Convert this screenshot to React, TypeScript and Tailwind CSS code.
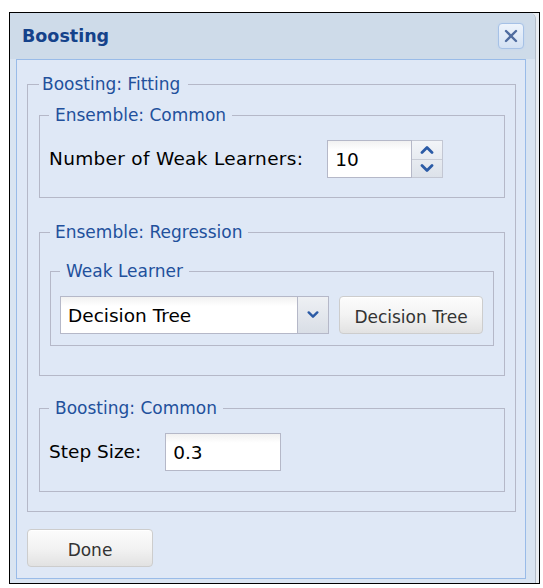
import React from 'react';

const legendText = 'text-[17px] leading-[20px] text-[#22509c]';
const fieldBorder = 'border border-[#b5b8c8]';
const inputCls =
  'h-[38px] border border-[#b5b8c8] bg-gradient-to-b from-[#f1f1f1] to-white to-[25%] px-[7px] text-[18.5px] text-black outline-none';
const btnCls =
  'h-[38px] rounded-[4px] border border-[#cdcdcd] bg-gradient-to-b from-[#fcfcfc] via-[#f3f3f3] via-50% to-[#e2e2e2] pt-[5px] text-[17px] text-[#333] shadow-[inset_0_1px_0_#fff]';

const Chevron = ({ up = false, w = 14 }: { up?: boolean; w?: number }) => (
  <svg width={w} height={w / 2 + 2} viewBox="0 0 14 9" fill="none">
    <path
      d={up ? 'M2 7.5 L7 2.5 L12 7.5' : 'M2 1.5 L7 6.5 L12 1.5'}
      stroke="#2b5ba6"
      strokeWidth="2.8"
      strokeLinecap="round"
      strokeLinejoin="round"
    />
  </svg>
);

export default function App() {
  return (
    <div className="min-h-[588px] bg-white pl-[9px] pt-[12px] font-['DejaVu_Sans',sans-serif]">
      <div className="flex h-[572px] w-[531px] border border-black bg-[#e9edf2]">
        {/* window */}
        <div className="flex h-full w-[526px] flex-col rounded-tr-[6px] border-r border-[#b3bcc8] bg-[#d9e4f1] pb-[4px] pl-[6px] pr-[9px]">
          {/* header */}
          <div className="-ml-[6px] -mr-[9px] flex h-[46px] items-center justify-between rounded-tr-[6px] bg-[#cedbe9] pl-[12px] pr-[11px]">
            <span className="text-[17.5px] font-bold text-[#15428b]">Boosting</span>
            <button className="flex h-[26px] w-[26px] items-center justify-center rounded-[4px] border border-[#a6c1e6] bg-gradient-to-b from-[#eef4fc] to-[#d3e1f3] shadow-[0_0_2px_#bcd3f0]">
              <svg width="14" height="14" viewBox="0 0 14 14">
                <path d="M2 2 L12 12 M12 2 L2 12" stroke="#4f6c9f" strokeWidth="2.4" strokeLinecap="round" />
              </svg>
            </button>
          </div>

          {/* body */}
          <div className="flex-1 border border-[#99bbe8] bg-[#dfe8f6] pl-[10px] pr-[9px] pt-[14px]">
            <fieldset className={`${fieldBorder} pb-[19px] pl-[11px] pr-[10px] pt-[11px]`}>
              <legend className={`${legendText} pl-[3px] pr-[8px]`}>Boosting: Fitting</legend>

              <fieldset className={`${fieldBorder} pb-[19px] pl-[9px] pt-[15px]`}>
                <legend className={`${legendText} pl-[6px] pr-[6px]`}>Ensemble: Common</legend>
                <div className="flex items-center gap-6">
                  <span className="text-[18.5px] tracking-[0.3px] text-black">Number of Weak Learners:</span>
                  <div className="flex">
                    <input className={`${inputCls} w-[85px]`} defaultValue="10" />
                    <div className="flex h-[38px] w-[31px] flex-col border border-l-0 border-[#c3c7d3] bg-gradient-to-b from-[#f2f4f8] to-[#dde2ea]">
                      <button className="flex flex-1 items-center justify-center border-b border-[#c9cdd7]">
                        <Chevron up />
                      </button>
                      <button className="flex flex-1 items-center justify-center">
                        <Chevron />
                      </button>
                    </div>
                  </div>
                </div>
              </fieldset>

              <fieldset className={`${fieldBorder} mt-[24px] pb-[29px] pl-[10px] pr-[10px] pt-[19px]`}>
                <legend className={`${legendText} pl-[5px] pr-[6px]`}>Ensemble: Regression</legend>
                <fieldset className={`${fieldBorder} pb-[11px] pl-[9px] pt-[15px]`}>
                  <legend className={`${legendText} pl-[6px] pr-[6px]`}>Weak Learner</legend>
                  <div className="flex items-center gap-[10px]">
                    <div className="flex">
                      <input className={`${inputCls} w-[238px]`} defaultValue="Decision Tree" />
                      <div className="flex h-[38px] w-[31px] items-center justify-center border border-l-0 border-[#b5b8c8] bg-gradient-to-b from-[#eef0f4] to-[#d9dee6]">
                        <Chevron w={12} />
                      </div>
                    </div>
                    <button className={`${btnCls} w-[144px]`}>Decision Tree</button>
                  </div>
                </fieldset>
              </fieldset>

              <fieldset className={`${fieldBorder} mt-[22px] pb-[20px] pl-[9px] pt-[15px]`}>
                <legend className={`${legendText} pl-[6px] pr-[6px]`}>Boosting: Common</legend>
                <div className="flex items-center gap-6">
                  <span className="text-[18.5px] text-black">Step Size:</span>
                  <input className={`${inputCls} w-[116px]`} defaultValue="0.3" />
                </div>
              </fieldset>
            </fieldset>

            <button className={`${btnCls} mt-[17px] w-[126px]`}>Done</button>
          </div>
        </div>
      </div>
    </div>
  );
}
